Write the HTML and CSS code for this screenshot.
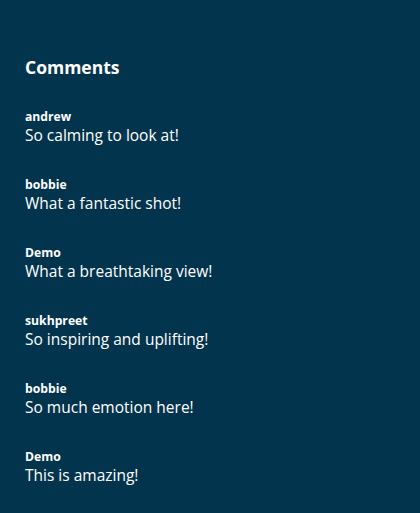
FILE: index.html
```html
<!DOCTYPE html>
<html lang="en">
<head>
<meta charset="utf-8">
<title>Comments</title>
<link rel="stylesheet" href="styles.css">
</head>
<body>
<section class="comments">
  <h2 class="comments-title">Comments</h2>
  <ul class="comment-list">
    <li class="comment"><div class="comment-user">andrew</div><div class="comment-text">So calming to look at!</div></li>
    <li class="comment"><div class="comment-user">bobbie</div><div class="comment-text">What a fantastic shot!</div></li>
    <li class="comment"><div class="comment-user">Demo</div><div class="comment-text">What a breathtaking view!</div></li>
    <li class="comment"><div class="comment-user">sukhpreet</div><div class="comment-text">So inspiring and uplifting!</div></li>
    <li class="comment"><div class="comment-user">bobbie</div><div class="comment-text">So much emotion here!</div></li>
    <li class="comment"><div class="comment-user">Demo</div><div class="comment-text">This is amazing!</div></li>
  </ul>
</section>
</body>
</html>
```
FILE: styles.css
```css
html, body {
  margin: 0;
  padding: 0;
  background: #03344d;
  height: 100%;
}
body {
  font-family: "Open Sans", "Noto Sans", sans-serif;
  color: #ffffff;
}
.comments {
  padding: 53px 25px 0 25px;
}
.comments-title {
  margin: 0 0 27px 0;
  font-size: 17.5px;
  font-weight: 700;
  line-height: 28px;
}
.comment-list {
  list-style: none;
  margin: 0;
  padding: 0;
  display: flex;
  flex-direction: column;
  gap: 30px;
}
.comment-user {
  font-size: 12.2px;
  font-weight: 700;
  line-height: 17px;
}
.comment-text {
  font-size: 15.5px;
  line-height: 21px;
}
```
